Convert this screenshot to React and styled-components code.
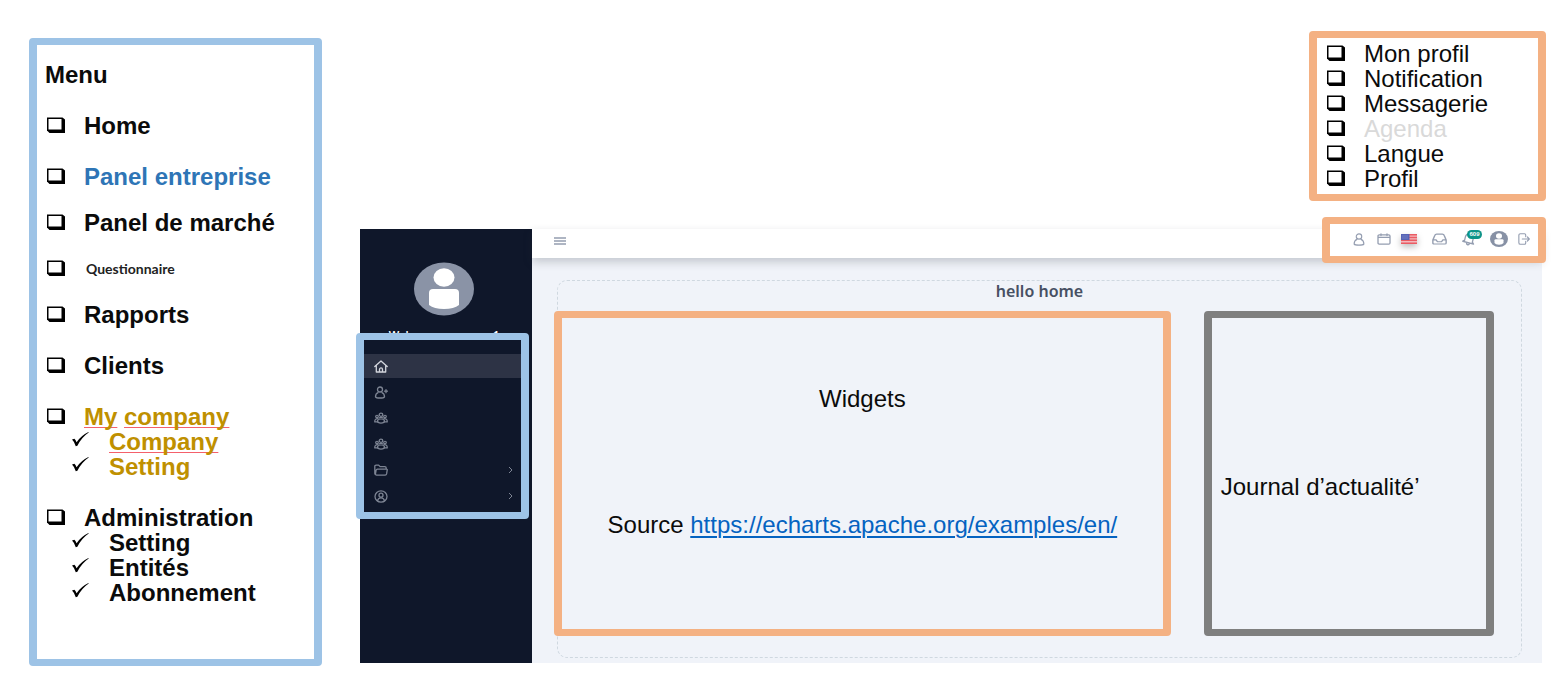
import React from "react";
import styled, { createGlobalStyle, css } from "styled-components";

const GlobalStyle = createGlobalStyle`
  * {
    box-sizing: border-box;
  }
  body {
    margin: 0;
    background: #fff;
    color: #0b0b0b;
    font-family: "Liberation Sans", Arial, sans-serif;
    font-size: 24px;
    line-height: 25px;
  }
  ul {
    list-style: none;
    margin: 0;
    padding: 0;
  }
  h1,
  h2,
  p {
    margin: 0;
    font-size: inherit;
  }
`;

const frameColors = {
  blue: "#9dc3e6",
  orange: "#f4b183",
  gray: "#7f7f7f",
};

const frame = css`
  border: solid ${({ $frame }) => frameColors[$frame]};
  border-width: 7px 8px;
  border-radius: 4px;
`;

const Page = styled.div`
  display: grid;
  grid-template-columns: 293px 1fr;
  column-gap: 38px;
  align-items: start;
  padding: 31px 25px 33px 29px;
`;

const MenuBox = styled.aside`
  ${frame}
  margin-top: 7px;
  padding: 17px 8px 54px;
  font-weight: bold;
`;

const MenuItem = styled.li`
  margin-top: ${({ $tight }) => ($tight ? "21px" : "26px")};
  color: ${({ $color }) => $color || "inherit"};
`;

const Line = styled.div`
  display: grid;
  grid-template-columns: 37px 1fr;
  align-items: center;
  height: 25px;
  padding-left: ${({ $indent }) => ($indent ? "27px" : "2px")};
  color: ${({ $muted }) => ($muted ? "#d9d9d9" : "inherit")};
  white-space: nowrap;

  svg {
    margin-bottom: ${({ $indent }) => ($indent ? "4px" : "2px")};
    color: #000;
  }
`;

const SmallLabel = styled.span`
  padding-left: 2px;
  font-family: Lato, sans-serif;
  font-size: 14px;
  color: #222;
`;

const Misspelled = styled.span`
  text-decoration: underline 1px #f4606b;
  text-decoration-skip-ink: none;
  text-underline-offset: 2px;
`;

const Main = styled.main`
  display: flex;
  flex-direction: column;
  min-width: 0;
`;

const Legend = styled.ul`
  ${frame}
  align-self: flex-end;
  width: 237px;
  margin-right: -4px;
  padding: 3px 8px;
`;

const Dashboard = styled.div`
  display: grid;
  grid-template-columns: 172px 1fr;
  margin-top: 28px;
`;

const Sidebar = styled.div`
  display: flex;
  flex-direction: column;
  padding-right: 4px;
  background: #0f172a;
`;

const Avatar = styled.svg`
  display: block;
  width: 60px;
  height: 54px;
  margin: 33px auto 11px;
`;

const Welcome = styled.p`
  height: 18px;
  color: #fff;
  font-family: "Noto Sans", sans-serif;
  font-size: 11px;
  line-height: 16px;
  font-weight: 600;
  text-align: center;
`;

const Nav = styled.nav`
  ${frame}
  position: relative;
  display: flex;
  flex-direction: column;
  gap: 2px;
  margin: -12px -1px 0 -4px;
  padding: 14px 0 4px;
  background: #0f172a;
`;

const NavLink = styled.a`
  display: flex;
  align-items: center;
  justify-content: space-between;
  height: 24px;
  padding: 0 8px 0 10px;
  color: ${({ $active }) => ($active ? "#d3d6dd" : "#7d8493")};
  background: ${({ $active }) => ($active ? "#2d3345" : "transparent")};
`;

const Body = styled.div`
  display: flex;
  flex-direction: column;
  min-width: 0;
  background: #f0f3f9;
`;

const Header = styled.header`
  display: flex;
  align-items: flex-start;
  justify-content: space-between;
  height: 29px;
  padding-left: 21px;
  background: #fff;
  box-shadow: 0 4px 10px rgba(40, 50, 60, 0.22);
`;

const Toolbar = styled.div`
  ${frame}
  position: relative;
  display: flex;
  align-items: center;
  gap: 3px;
  width: 224px;
  height: 46px;
  margin: -12px -4px 0 0;
  padding: 0 3px 2px 16px;
  background: #fff;
`;

const Group = styled.div`
  display: flex;
`;

const IconButton = styled.button`
  position: relative;
  display: flex;
  align-items: center;
  justify-content: center;
  width: ${({ $width }) => $width || 25}px;
  height: 24px;
  padding: 0;
  border: 0;
  background: none;
  color: #949db0;
`;

const Badge = styled.span`
  position: absolute;
  top: 3px;
  left: 13px;
  width: 15px;
  height: 9px;
  border-radius: 5px;
  background: #0d9488;
  color: #fff;
  font-size: 6px;
  line-height: 9px;
  font-weight: bold;
  text-align: center;
`;

const FlagIcon = styled.svg`
  filter: drop-shadow(0 3px 3px rgba(0, 0, 0, 0.25));
`;

const Content = styled.div`
  flex: 1;
  padding: 22px 20px 5px 25px;
`;

const Panel = styled.section`
  border: 1px dashed #cfd8e0;
  border-radius: 10px;
  padding-bottom: 21px;
`;

const Title = styled.h1`
  margin-bottom: 10px;
  color: #475063;
  font-family: "Noto Sans", sans-serif;
  font-size: 16px;
  line-height: 20px;
  font-weight: 600;
  text-align: center;
`;

const Columns = styled.div`
  display: grid;
  grid-template-columns: 17fr 8fr;
  gap: 33px;
  margin: 0 27px 0 -4px;
`;

const Card = styled.div`
  ${frame}
  min-height: 325px;
`;

const Widgets = styled(Card)`
  display: flex;
  flex-direction: column;
  align-items: center;
  gap: 101px;
  padding-top: 68px;
`;

const Journal = styled(Card)`
  padding: 156px 9px 0;
`;

const SourceLink = styled.a`
  color: #0563c1;
  text-decoration: underline 2px;
  text-underline-offset: 3px;
`;

const BoxBullet = () => (
  <svg width="18" height="16" viewBox="0 0 18 16" aria-hidden="true">
    <path d="M0 .5h15.5l2.5 2V16H2.5L0 13.5z" fill="currentColor" />
    <path d="M1.5 2h13v10.5h-13z" fill="#fff" />
  </svg>
);

const CheckBullet = () => (
  <svg width="17" height="15" viewBox="0 0 17 15" aria-hidden="true">
    <path d="M0 7.6 2.4 6.8Q3.8 8 4.6 10.2 9 3.6 16.4 0l.3.6Q9.8 5.3 5.4 13.7L3.8 14.2Q2.2 9.6 0 7.6z" fill="currentColor" />
  </svg>
);

const Icon = ({ width = 14, height = 13, children }) => (
  <svg
    width={width}
    height={height}
    viewBox="0 0 14 13"
    preserveAspectRatio="none"
    fill="none"
    stroke="currentColor"
    strokeWidth="1.3"
    strokeLinecap="round"
    strokeLinejoin="round"
    aria-hidden="true"
  >
    {children}
  </svg>
);

const HomeIcon = () => (
  <Icon>
    <path d="M.8 6.6 7 1l6.2 5.6M2.3 5.5V12h9.4V5.5M5.5 12V9.4a1.5 1.5 0 0 1 3 0V12" />
  </Icon>
);

const UserPlusIcon = () => (
  <Icon>
    <circle cx="6" cy="3.500" r="2.500" />
    <path d="M4 6.6C2.400 7.300 1.500 8.700 1.500 10.800c1 1.600 8 1.600 9 0 0-2.100-.9-3.500-2.500-4.200M12 3.700v3M10.500 5.200h3" />
  </Icon>
);

const UsersIcon = () => (
  <Icon height={12}>
    <circle cx="7" cy="3" r="1.800" />
    <circle cx="3" cy="4.800" r="1.300" />
    <circle cx="11" cy="4.800" r="1.300" />
    <ellipse cx="7" cy="9.800" rx="3.500" ry="2.200" />
    <path d="M3.600 10.800H.8C.6 8.500 1.500 7.200 3.800 7.100M10.400 10.800h2.800c.2-2.300-.7-3.600-3-3.700M5 6.400Q7 5.200 9 6.400" />
  </Icon>
);

const FolderIcon = () => (
  <Icon height={12}>
    <path d="M2.600 12C1.400 12 .8 11.400.8 10.400V2.500c0-.8.5-1.300 1.300-1.300h2.500l1.500 1.700h4.700c.9 0 1.400.5 1.400 1.400v1M2.600 12C1.700 12 1.300 11.400 1.500 10.500l.6-3.800c.2-.8.6-1.200 1.400-1.200h8.800c.8 0 1.100.4.900 1.200l-.6 4c-.2.900-.6 1.300-1.400 1.300z" />
  </Icon>
);

const AccountIcon = () => (
  <Icon>
    <ellipse cx="7" cy="6.500" rx="6" ry="5.700" />
    <circle cx="7" cy="5.200" r="2" />
    <path d="M3.500 10.800c.4-2 1.700-3 3.500-3s3.100 1 3.500 3" />
  </Icon>
);

const Chevron = () => (
  <svg width="5" height="8" viewBox="0 0 5 8" fill="none" stroke="currentColor" aria-hidden="true">
    <path d="M1 1l3 3-3 3" />
  </svg>
);

const PersonIcon = () => (
  <Icon width={12} height={13}>
    <ellipse cx="7" cy="3.500" rx="3.200" ry="2.600" />
    <path d="M4.600 6.400C2.500 7.200 1.300 8.700 1.300 11c1.200 1.600 10.200 1.600 11.400 0 0-2.300-1.200-3.800-3.300-4.600" />
  </Icon>
);

const CalendarIcon = () => (
  <Icon width={14} height={12}>
    <path d="M2.200 2h9.600c.7 0 1.200.5 1.200 1.200v7.600c0 .7-.5 1.200-1.200 1.200H2.200C1.500 12 1 11.500 1 10.800V3.200C1 2.500 1.500 2 2.200 2zM1 4.800h12M4 .8v2M10 .8v2" />
  </Icon>
);

const UsFlag = () => (
  <FlagIcon width="16" height="10" viewBox="0 0 16 10" aria-hidden="true">
    <path d="M0 0h16v10H0z" fill="#f3b9bd" />
    <path d="M0 .7h16M0 3.500h16M0 6.300h16M0 9.200h16" stroke="#ea5b63" strokeWidth="1.500" />
    <path d="M0 0h8.500v6H0z" fill="#5663b5" />
    <path d="M1.500 2h6M1.500 4h6" stroke="#8e98d2" strokeDasharray="1 1" />
  </FlagIcon>
);

const InboxIcon = () => (
  <Icon width={15} height={12}>
    <path d="M.8 7.500 2.700 2.400C3 1.500 3.500 1.200 4.300 1.200h5.400c.8 0 1.300.3 1.600 1.200l1.900 5.100v3.200c0 .8-.4 1.200-1.200 1.200H2c-.8 0-1.200-.4-1.200-1.200zM.8 7.500h3l1.300 2h3.800l1.300-2h3" />
  </Icon>
);

const BellIcon = () => (
  <Icon width={14} height={14}>
    <g transform="rotate(14 7 6.500)">
      <path d="M3 9.500V5.700C3 3.400 4.600 1.800 7 1.800s4 1.600 4 3.900v3.800M1.500 10h11M3 8.500 1.500 10M11 8.500l1.500 1.500M5.500 10.500c.2 2 2.800 2 3 0" />
    </g>
  </Icon>
);

const LogoutIcon = () => (
  <Icon width={12} height={12}>
    <path d="M9 4V2.200C9 1.300 8.500.8 7.600.8H2.800C1.700.8 1 1.400 1 2.500v8c0 1.100.7 1.700 1.800 1.700h4.800c.9 0 1.400-.5 1.400-1.400V9M5 6.500h8M11 4.300l2.200 2.200L11 8.700" />
  </Icon>
);

const ProfileIcon = () => (
  <svg width="18" height="16" viewBox="0 0 18 16" aria-hidden="true">
    <ellipse cx="9" cy="8" rx="9" ry="8" fill="#8791a5" />
    <ellipse cx="9" cy="5" rx="3" ry="2.800" fill="#fff" />
    <path d="M4.500 9.300Q4.500 8.300 5.800 8.300h6.400q1.300 0 1.300 1V12q-1 1.700-4.500 1.700T4.500 12z" fill="#fff" />
  </svg>
);

const navItems = [
  { name: "Home", icon: <HomeIcon />, active: true },
  { name: "Panel entreprise", icon: <UserPlusIcon /> },
  { name: "Panel de marché", icon: <UsersIcon /> },
  { name: "Clients", icon: <UsersIcon /> },
  { name: "My company", icon: <FolderIcon />, more: true },
  { name: "Administration", icon: <AccountIcon />, more: true },
];

const menuItems = [
  { label: "Home" },
  { label: "Panel entreprise", color: "#2e75b6" },
  { label: "Panel de marché", tight: true },
  { label: <SmallLabel>Questionnaire</SmallLabel>, tight: true },
  { label: "Rapports", tight: true },
  { label: "Clients" },
  {
    label: (
      <span>
        <Misspelled>My</Misspelled> <Misspelled>company</Misspelled>
      </span>
    ),
    color: "#bf9000",
    children: [<Misspelled>Company</Misspelled>, "Setting"],
  },
  { label: "Administration", children: ["Setting", "Entités", "Abonnement"] },
];

const legendItems = ["Mon profil", "Notification", "Messagerie", "Agenda", "Langue", "Profil"];

const Menu = () => (
  <MenuBox $frame="blue">
    <h2>Menu</h2>
    <ul>
      {menuItems.map(({ label, color, tight, children = [] }, i) => (
        <MenuItem key={i} $color={color} $tight={tight}>
          <Line>
            <BoxBullet />
            {label}
          </Line>
          {children.length > 0 && (
            <ul>
              {children.map((child, j) => (
                <li key={j}>
                  <Line $indent>
                    <CheckBullet />
                    <span>{child}</span>
                  </Line>
                </li>
              ))}
            </ul>
          )}
        </MenuItem>
      ))}
    </ul>
  </MenuBox>
);

const SideNav = () => (
  <Sidebar>
    <Avatar viewBox="0 0 60 54" aria-hidden="true">
      <ellipse cx="30" cy="27" rx="30" ry="26.500" fill="#8a93a6" />
      <ellipse cx="30" cy="15.500" rx="10.500" ry="9.300" fill="#fff" />
      <path d="M15 31q0-4 4-4h22q4 0 4 4v12q-5 4-15 4t-15-4z" fill="#fff" />
    </Avatar>
    <Welcome>Welcome company 1</Welcome>
    <Nav $frame="blue">
      {navItems.map(({ name, icon, active, more }) => (
        <NavLink key={name} href="#" aria-label={name} $active={active}>
          {icon}
          {more && <Chevron />}
        </NavLink>
      ))}
    </Nav>
  </Sidebar>
);

const TopBar = () => (
  <Header>
    <IconButton aria-label="Toggle menu" $width={14}>
      <svg width="12" height="8" viewBox="0 0 12 8" stroke="currentColor" strokeWidth="1.500" aria-hidden="true">
        <path d="M0 1h12M0 4h12M0 7h12" />
      </svg>
    </IconButton>
    <Toolbar $frame="orange">
      <Group>
        <IconButton aria-label="Mon profil">
          <PersonIcon />
        </IconButton>
        <IconButton aria-label="Agenda">
          <CalendarIcon />
        </IconButton>
        <IconButton aria-label="Langue">
          <UsFlag />
        </IconButton>
      </Group>
      <Group>
        <IconButton aria-label="Messagerie" $width={30}>
          <InboxIcon />
        </IconButton>
        <IconButton aria-label="Notification" $width={30}>
          <BellIcon />
          <Badge>609</Badge>
        </IconButton>
        <IconButton aria-label="Profil" $width={30}>
          <ProfileIcon />
        </IconButton>
        <IconButton aria-label="Logout" $width={20}>
          <LogoutIcon />
        </IconButton>
      </Group>
    </Toolbar>
  </Header>
);

const App = () => (
  <>
    <GlobalStyle />
    <Page>
      <Menu />
      <Main>
        <Legend $frame="orange">
          {legendItems.map((item) => (
            <li key={item}>
              <Line $muted={item === "Agenda"}>
                <BoxBullet />
                {item}
              </Line>
            </li>
          ))}
        </Legend>
        <Dashboard>
          <SideNav />
          <Body>
            <TopBar />
            <Content>
              <Panel>
                <Title>hello home</Title>
                <Columns>
                  <Widgets $frame="orange">
                    <p>Widgets</p>
                    <p>
                      Source{" "}
                      <SourceLink href="https://echarts.apache.org/examples/en/">
                        https://echarts.apache.org/examples/en/
                      </SourceLink>
                    </p>
                  </Widgets>
                  <Journal $frame="gray">
                    <p>Journal d’actualité’</p>
                  </Journal>
                </Columns>
              </Panel>
            </Content>
          </Body>
        </Dashboard>
      </Main>
    </Page>
  </>
);

export default App;
